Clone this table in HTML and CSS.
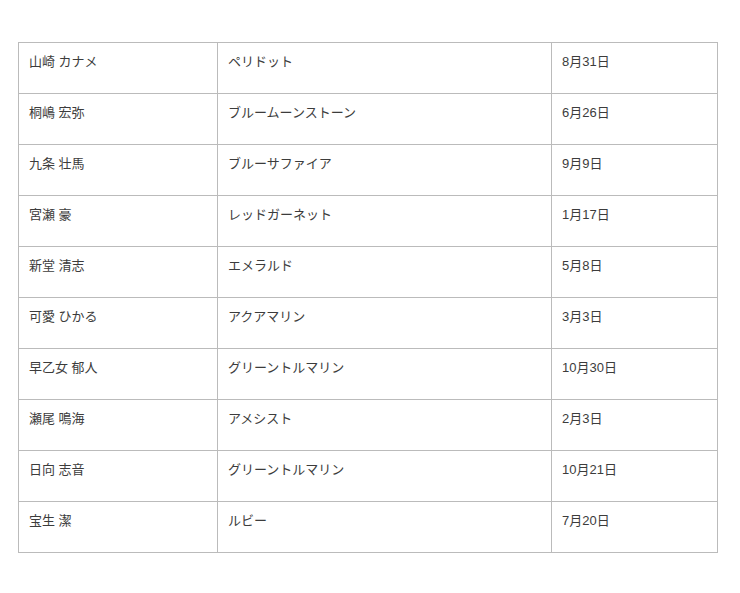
FILE: index.html
```html
<!DOCTYPE html>
<html lang="ja">
<head>
<meta charset="utf-8">
<link rel="stylesheet" href="styles.css">
</head>
<body>
<table class="list">
  <tbody>
    <tr><td class="c-name">山崎 カナメ</td><td class="c-stone">ペリドット</td><td class="c-date">8月31日</td></tr>
    <tr><td class="c-name">桐嶋 宏弥</td><td class="c-stone">ブルームーンストーン</td><td class="c-date">6月26日</td></tr>
    <tr><td class="c-name">九条 壮馬</td><td class="c-stone">ブルーサファイア</td><td class="c-date">9月9日</td></tr>
    <tr><td class="c-name">宮瀬 豪</td><td class="c-stone">レッドガーネット</td><td class="c-date">1月17日</td></tr>
    <tr><td class="c-name">新堂 清志</td><td class="c-stone">エメラルド</td><td class="c-date">5月8日</td></tr>
    <tr><td class="c-name">可愛 ひかる</td><td class="c-stone">アクアマリン</td><td class="c-date">3月3日</td></tr>
    <tr><td class="c-name">早乙女 郁人</td><td class="c-stone">グリーントルマリン</td><td class="c-date">10月30日</td></tr>
    <tr><td class="c-name">瀬尾 鳴海</td><td class="c-stone">アメシスト</td><td class="c-date">2月3日</td></tr>
    <tr><td class="c-name">日向 志音</td><td class="c-stone">グリーントルマリン</td><td class="c-date">10月21日</td></tr>
    <tr><td class="c-name">宝生 潔</td><td class="c-stone">ルビー</td><td class="c-date">7月20日</td></tr>
  </tbody>
</table>
</body>
</html>
```
FILE: styles.css
```css
html, body {
  margin: 0;
  padding: 0;
  background: #fff;
}
body {
  padding: 42px 22px 0 18px;
  font-family: "Liberation Sans", "Noto Sans CJK JP", sans-serif;
  font-size: 13px;
  color: #3c3c3c;
}
.list {
  border-collapse: collapse;
  width: 700px;
  table-layout: fixed;
}
.list td {
  border: 1px solid #bbb;
  height: 51px;
  box-sizing: border-box;
  padding: 10px 10px;
  vertical-align: top;
  line-height: 18px;
}
.c-name { width: 199px; }
.c-stone { width: 334px; }
.c-date { width: 166px; }
```
